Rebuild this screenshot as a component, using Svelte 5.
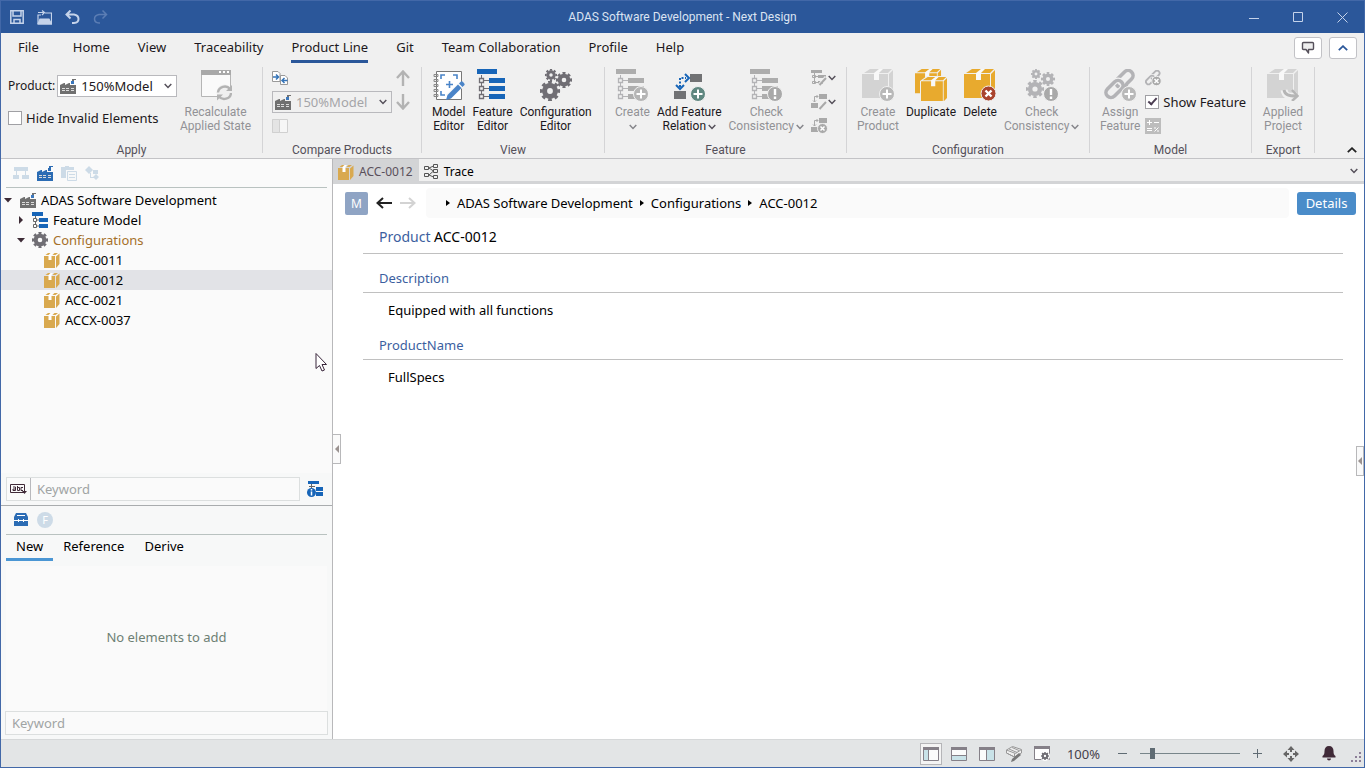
<script>
  const menus = ['File', 'Home', 'View', 'Traceability', 'Product Line', 'Git', 'Team Collaboration', 'Profile', 'Help'];
  const products = ['ACC-0011', 'ACC-0012', 'ACC-0021', 'ACCX-0037'];
  const crumbs = ['ADAS Software Development', 'Configurations', 'ACC-0012'];
  const fields = [
    { name: 'Description', value: 'Equipped with all functions' },
    { name: 'ProductName', value: 'FullSpecs' }
  ];

  let activeMenu = $state('Product Line');
  let selected = $state('ACC-0012');
  let paletteTab = $state('New');
  let hideInvalid = $state(false);
  let showFeature = $state(true);
  let zoom = $state(10);
</script>

{#snippet chevron(cls = '')}
  <svg class="chevron {cls}" width="8" height="6" viewBox="0 0 8 6" fill="none" stroke="currentColor" stroke-width="1.5"><path d="M.7 1 4 4.4 7.3 1" /></svg>
{/snippet}

{#snippet factory(dot = '#3c78bd')}
  <svg width="16" height="16" viewBox="0 0 16 16">
    <path fill="currentColor" d="M0 7l4-2h1v2l4-2h1v2h6v9H0zM12 2V1h4v1h-2v1h-2z" />
    <path fill={dot} d="M11 3h3v3h-3z" />
    <path fill="#dcdcdc" d="M2 10h3v1H2zm4 0h3v1H6zm5 0h3v1h-3zM2 12h3v1H2zm4 0h3v1H6zm5 0h3v1h-3z" />
  </svg>
{/snippet}

{#snippet smallBox()}
  <svg width="16" height="16" viewBox="0 0 16 16">
    <path fill="#d9a94f" d="M0 4h11v12H0zM1.500 3 4 1h4L6 3zm7 0 2-2H14l-2.500 2zM12 4.500l3.500-3V12L12 16z" />
    <path fill="#fff" d="M4.500 3h3v5h-3zM6.500 1H9L7.500 3h-3z" />
  </svg>
{/snippet}

{#snippet box()}
  <path fill="currentColor" d="M0 5h26v24H0zM2 4l6-4h22l-4 4zM27 5l4-4v24l-4 4z" />
  <path fill="#f8f8f8" d="M17 0h4l-4 4v7h-5V4z" />
{/snippet}

{#snippet plusBadge(fill)}
  <circle cx="25" cy="25" r="7.500" {fill} stroke="#f0f0f0" />
  <path stroke="#fff" stroke-width="2" d="M20.500 25h9M25 20.500v9" />
{/snippet}

{#snippet alertBadge()}
  <circle cx="25" cy="25" r="7.500" fill="#a9a9a9" stroke="#f0f0f0" />
  <path stroke="#fff" stroke-width="2.400" d="M25 20v6M25 27.500V30" />
{/snippet}

{#snippet featureTree(bar)}
  <path fill={bar} d="M0 0h20v5H0zM12 9h16v5H12zM12 17h16v5H12zM12 25h16v5H12z" />
  <path fill="none" stroke="currentColor" d="M4.500 6v22M7 11.500h5M7 19.500h5M7 27.500h5" />
  <path fill="#f0f0f0" stroke="currentColor" stroke-width="1.300" d="M2.500 9.500h4v4h-4zM2.500 17.500h4v4h-4zM2.500 25.500h4v4h-4z" />
{/snippet}

{#snippet cog(cx, cy, r)}
  <circle {cx} {cy} r={r * 0.54} fill="none" stroke="currentColor" stroke-width={r * 0.5} />
  <circle {cx} {cy} r={r * 0.86} fill="none" stroke="currentColor" stroke-width={r * 0.3} pathLength="16" stroke-dasharray="1.1 .9" stroke-dashoffset=".55" />
{/snippet}

{#snippet recalcIcon()}
  <svg width="32" height="32" viewBox="0 0 32 32" fill="none">
    <path fill="#fafafa" stroke="#b5b5b5" d="M1.500 2.500h29v25h-29z" />
    <path fill="#a9a9a9" d="M1 1h30v5H1z" />
    <path fill="#fff" d="M19 2h2v2h-2zM23 2h2v2h-2zM27 2h2v2h-2z" />
    <circle cx="24.500" cy="23.500" r="8" fill="#f0f0f0" />
    <path stroke="#b3b3b3" stroke-width="2.400" d="M18 23.500c.5-6 8.500-8 12-3.500M31 24c-.5 6-8.500 8-12 3.500" />
    <path fill="#b3b3b3" d="M32 16v6h-6zM17 31.500v-6h6z" />
  </svg>
{/snippet}

{#snippet modelIcon()}
  <svg width="32" height="32" viewBox="0 0 32 32" fill="none">
    <path fill="#fff" stroke="#777" d="M3.500 2.500h25v28h-25z" />
    <path stroke="#888" d="M1 5.500h4v2H1zM1 10.500h4v2H1zM1 15.500h4v2H1zM1 20.500h4v2H1zM1 25.500h4v2H1z" />
    <path stroke="#4a84c8" stroke-width="1.600" d="M8 10V6h4M20 6h4v4M8 22v4h4M16.500 12v7M13 15.500h7" />
    <path stroke="#f8f8f8" stroke-width="6" d="m15 28 14-13" />
    <path fill="#4a84c8" d="m13 31 1.500-5L25 15.500l3.500 3.500L18 29.500zM26 14.500l2-2c1-1 4.500 2.500 3.500 3.500l-2 2z" />
  </svg>
{/snippet}

{#snippet featureIcon()}
  <svg class="dark" width="32" height="32" viewBox="0 0 32 32">{@render featureTree('#1765b8')}</svg>
{/snippet}

{#snippet gearsIcon()}
  <svg class="gears" width="32" height="32" viewBox="0 0 32 32">
    {@render cog(11, 6, 6)}{@render cog(24, 11, 8)}{@render cog(10, 22, 10)}
  </svg>
{/snippet}

{#snippet createIcon()}
  <svg width="32" height="32" viewBox="0 0 32 32">{@render featureTree('#adadad')}{@render plusBadge('#b5b5b5')}</svg>
{/snippet}

{#snippet relationIcon()}
  <svg width="32" height="32" viewBox="0 0 32 32" fill="none">
    <path fill="#717274" d="M17 5h12v8H17zM1 22h12v8H1z" />
    <path stroke="#1765b8" stroke-width="2" stroke-dasharray="2 1.500" d="M7 18V9h6" />
    <path stroke="#1765b8" stroke-width="2" d="m12 5 4 4-4 4M3 16l4 4 4-4" />
    {@render plusBadge('#5f8780')}
  </svg>
{/snippet}

{#snippet checkFeatureIcon()}
  <svg width="32" height="32" viewBox="0 0 32 32">{@render featureTree('#adadad')}{@render alertBadge()}</svg>
{/snippet}

{#snippet createProductIcon()}
  <svg class="pale" width="32" height="32" viewBox="0 0 32 32">{@render box()}{@render plusBadge('#b9b9b9')}</svg>
{/snippet}

{#snippet duplicateIcon()}
  <svg class="gold" width="32" height="32" viewBox="0 0 32 32">
    <g transform="scale(.84)">{@render box()}</g>
    <path fill="#f0f0f0" d="m5 12 7-5h20v25H5z" />
    <g transform="translate(6 8) scale(.84)">{@render box()}</g>
  </svg>
{/snippet}

{#snippet deleteIcon()}
  <svg class="gold" width="32" height="32" viewBox="0 0 32 32">
    {@render box()}
    <circle cx="24.500" cy="24.500" r="7.500" fill="#aa442d" stroke="#f0f0f0" />
    <path stroke="#fff" stroke-width="2.400" d="m21.500 21.500 6 6m0-6-6 6" />
  </svg>
{/snippet}

{#snippet checkConfigIcon()}
  <svg width="32" height="32" viewBox="0 0 32 32">
    {@render cog(10, 5, 5)}{@render cog(22, 10, 7)}{@render cog(9, 20, 9)}{@render alertBadge()}
  </svg>
{/snippet}

{#snippet links()}
  <g fill="none" stroke="currentColor" stroke-width="3.600">
    <rect x="-10" y="-5" width="20" height="10" rx="5" transform="translate(20.500 10) rotate(-45)" />
    <rect x="-10" y="-5" width="20" height="10" rx="5" transform="translate(10.500 20) rotate(-45)" stroke="#f0f0f0" stroke-width="6" />
    <rect x="-10" y="-5" width="20" height="10" rx="5" transform="translate(10.500 20) rotate(-45)" />
    <path d="m17 21 6-6" />
  </g>
{/snippet}

{#snippet assignIcon()}
  <svg width="32" height="32" viewBox="0 0 32 32">{@render links()}{@render plusBadge('#b9b9b9')}</svg>
{/snippet}

{#snippet appliedIcon()}
  <svg class="pale" width="32" height="32" viewBox="0 0 32 32" fill="none">
    {@render box()}
    <path stroke="#f0f0f0" stroke-width="7" d="M17 21c1 6 5 7 13 6" />
    <path stroke="#b5b5b5" stroke-width="3" d="M17 21c1 5 5 6 12 6" />
    <path stroke="#b5b5b5" stroke-width="2.500" d="m25 21 5.500 6-5.500 5" />
  </svg>
{/snippet}

{#snippet large(icon, lines, disabled = false, menu = false)}
  <button class="large" {disabled}>
    {@render icon()}
    <span>{lines[0]}<br />{lines[1] ?? ''}{#if menu}{@render chevron('inline')}{/if}</span>
  </button>
{/snippet}

{#snippet miniFeature(kind)}
  <svg width="17" height="16" viewBox="0 0 17 16" fill="none" stroke="#a9a9a9">
    {#if kind === 'tree'}
      <path fill="#a9a9a9" stroke="none" d="M0 0h11v3H0zM7 5h8v3H7zM7 11h5v3H7z" />
      <path d="M3.500 3v11M1.500 5.500h3v2h-3zM1.500 11.500h3v2h-3zM5 6.500h2M5 12.500h2" />
    {:else}
      <path fill="#a9a9a9" stroke="none" d="M8 0h8v5H8zM0 9h7v5H0z" />
      <path d="M3.500 8V2.500H7M5.500 1l1.500 1.500L5.500 4M2 6.500 3.500 8 5 6.500" />
    {/if}
    {#if kind === 'remove'}
      <circle cx="11.500" cy="10.500" r="5" fill="#a9a9a9" stroke="#f0f0f0" />
      <path stroke="#fff" stroke-width="1.500" d="m9.500 8.500 4 4m0-4-4 4" />
    {:else}
      <path stroke="#f0f0f0" stroke-width="3" d="m8 15 7-8" />
      <path stroke-width="2" d="m8.500 15 6.500-7" />
    {/if}
  </svg>
{/snippet}

{#snippet miniTree()}
  <svg width="16" height="16" viewBox="0 0 16 16" fill="none">
    <path fill="#1765b8" d="M0 0h11v4H0zM7 6h9v4H7zM7 12h9v4H7z" />
    <path stroke="#666" d="M3.500 4v10M5 8h2M5 14h2" />
    <path fill="#fff" stroke="#666" d="M1.500 6.500h3v3h-3zM1.500 12.500h3v3h-3z" />
  </svg>
{/snippet}

{#snippet pane(kind)}
  <svg width="16" height="14" viewBox="0 0 16 14">
    <path fill="#fbfbfb" d="M1 1h14v12H1z" />
    {#if kind === 'left'}<path fill="#c9e2e8" d="M1 3h4v10H1z" /><path fill="#858088" d="M5 3h1v10H5z" />{/if}
    {#if kind === 'bottom'}<path fill="#c9e2e8" d="M1 9h14v4H1z" /><path fill="#858088" d="M1 8h14v1H1z" />{/if}
    {#if kind === 'right'}<path fill="#c9e2e8" d="M8 3h7v10H8z" /><path fill="#858088" d="M7 3h1v10H7z" />{/if}
    <path fill="#858088" d="M0 0h16v3H0z" />
    <path fill="none" stroke="#858088" d="M.5.5h15v13H.5z" />
  </svg>
{/snippet}

<div class="window">
  <header class="titlebar">
    <div class="quick">
      <button aria-label="Save"><svg width="14" height="14" viewBox="0 0 14 14" fill="none" stroke="currentColor" stroke-width="1.500"><path d="M.8.800h12.400v12.400H.8zM3 1v5h8V1M4 13V9.500h6V13" /></svg></button>
      <button aria-label="Open"><svg width="15" height="15" viewBox="0 0 15 15" fill="none" stroke="currentColor" stroke-width="1.200"><path d="M1 14V5h3m4-2h6.500v11H1M1 2.500h6M5 .5l2.500 2L5 5" /><path fill="currentColor" d="M1 14 3 9h9l2.500 5z" /></svg></button>
      <button aria-label="Undo"><svg width="15" height="14" viewBox="0 0 15 14" fill="none" stroke="currentColor" stroke-width="2"><path d="M2 4.500h7c6 1 6 8 0 8.500H7M5.500.5l-4 4 4 4" /></svg></button>
      <button aria-label="Redo" disabled><svg width="15" height="14" viewBox="0 0 15 14" fill="none" stroke="currentColor" stroke-width="1.500"><path d="M13 4.500H6c-6 1-6 8 0 8.500h1M9.500.5l4 4-4 4" /></svg></button>
    </div>
    <h1>ADAS Software Development - Next Design</h1>
    <div class="controls">
      <button aria-label="Minimize"><svg width="11" height="11" viewBox="0 0 11 11" stroke="currentColor"><path d="M0 6.500h10" /></svg></button>
      <button aria-label="Maximize"><svg width="11" height="11" viewBox="0 0 11 11" fill="none" stroke="currentColor"><path d="M.5.5h9v9h-9z" /></svg></button>
      <button aria-label="Close"><svg width="11" height="11" viewBox="0 0 11 11" stroke="currentColor"><path d="m.5.5 10 10m0-10-10 10" /></svg></button>
    </div>
  </header>

  <nav class="menubar">
    {#each menus as menu}
      <button class:active={menu === activeMenu} onclick={() => (activeMenu = menu)}>{menu}</button>
    {/each}
    <div class="menu-tools">
      <button aria-label="Comments"><svg width="14" height="14" viewBox="0 0 14 14" fill="#eee" stroke="#55505a" stroke-width="1.400"><path d="M1.500 2.500q0-1 1-1h9q1 0 1 1v5q0 1-1 1H7.500v3.500L5 8.500H2.500q-1 0-1-1z" stroke-linejoin="round" /></svg></button>
      <button aria-label="Collapse"><svg width="10" height="6" viewBox="0 0 10 6" fill="none" stroke="#2b579a" stroke-width="1.800"><path d="m.8 5.200 4.200-4 4.200 4" /></svg></button>
    </div>
  </nav>

  <section class="ribbon">
    <div class="group apply">
      <div class="tools">
        <div class="stack">
          <div class="row">
            <label for="product">Product:</label>
            <div class="combo">
              <i>{@render factory()}</i>
              <select id="product"><option>150%Model</option></select>
              {@render chevron()}
            </div>
          </div>
          <label class="check"><input type="checkbox" bind:checked={hideInvalid} />Hide Invalid Elements</label>
        </div>
        {@render large(recalcIcon, ['Recalculate', 'Applied State'], true)}
      </div>
      <h2>Apply</h2>
    </div>

    <div class="group compare">
      <div class="tools">
        <div class="column">
          <button class="mini" aria-label="Compare"><svg width="16" height="14" viewBox="0 0 16 14" fill="#fff" stroke="#999"><path d="M.5.5H6l2 2v8H.5zM8.500 4.500H13l2.500 2.500v6.500h-7z" /><path fill="none" stroke="#3574b8" stroke-width="1.500" d="M1 6h5M4 3.500 6.500 6 4 8.500M15.500 9.500h-5M12.500 7 10 9.500l2.500 2.500" /></svg></button>
          <div class="combo disabled">
            <i>{@render factory()}</i>
            <select disabled aria-label="Compare with"><option>150%Model</option></select>
            {@render chevron()}
          </div>
          <button class="mini" disabled aria-label="Split"><svg width="16" height="14" viewBox="0 0 16 14" stroke="#d0d0d0"><path fill="#f6f6f6" d="M.5.5h15v13H.5z" /><path fill="#e4e4e4" d="M.5.5h7v13h-7z" /></svg></button>
        </div>
        <div class="arrows">
          <button class="mini" disabled aria-label="Previous difference"><svg width="14" height="16" viewBox="0 0 14 16" fill="none" stroke="#b3b3b3" stroke-width="2.400"><path d="M7 16V2M1 8l6-6.500L13 8" /></svg></button>
          <button class="mini" disabled aria-label="Next difference"><svg width="14" height="16" viewBox="0 0 14 16" fill="none" stroke="#b3b3b3" stroke-width="2.400"><path d="M7 0v14M1 8l6 6.500L13 8" /></svg></button>
        </div>
      </div>
      <h2>Compare Products</h2>
    </div>

    <div class="group view">
      <div class="tools">
        {@render large(modelIcon, ['Model', 'Editor'])}
        {@render large(featureIcon, ['Feature', 'Editor'])}
        {@render large(gearsIcon, ['Configuration', 'Editor'])}
      </div>
      <h2>View</h2>
    </div>

    <div class="group feature">
      <div class="tools">
        {@render large(createIcon, ['Create'], true, true)}
        {@render large(relationIcon, ['Add Feature', 'Relation'], false, true)}
        {@render large(checkFeatureIcon, ['Check', 'Consistency'], true, true)}
        <div class="column minis">
          <button class="mini" disabled aria-label="Edit feature">{@render miniFeature('tree')}{@render chevron()}</button>
          <button class="mini" disabled aria-label="Edit relation">{@render miniFeature('relation')}{@render chevron()}</button>
          <button class="mini" disabled aria-label="Remove relation">{@render miniFeature('remove')}</button>
        </div>
      </div>
      <h2>Feature</h2>
    </div>

    <div class="group config">
      <div class="tools">
        {@render large(createProductIcon, ['Create', 'Product'], true)}
        {@render large(duplicateIcon, ['Duplicate'])}
        {@render large(deleteIcon, ['Delete'])}
        {@render large(checkConfigIcon, ['Check', 'Consistency'], true, true)}
      </div>
      <h2>Configuration</h2>
    </div>

    <div class="group model">
      <div class="tools">
        {@render large(assignIcon, ['Assign', 'Feature'], true)}
        <div class="column minis">
          <button class="mini" disabled aria-label="Unassign feature">
            <svg width="17" height="16" viewBox="0 0 34 32">
              {@render links()}
              <circle cx="23" cy="22" r="9.500" fill="#a9a9a9" stroke="#f0f0f0" stroke-width="2" />
              <path stroke="#fff" stroke-width="3" d="m19 18 8 8m0-8-8 8" />
            </svg>
          </button>
          <label class="check"><input type="checkbox" bind:checked={showFeature} />Show Feature</label>
          <button class="mini" disabled aria-label="Formula"><svg width="16" height="16" viewBox="0 0 16 16" fill="none" stroke="#fff"><path fill="#bdbdbd" stroke="none" d="M0 0h16v16H0z" /><path d="M2 4.500h5M4.500 2v5M9 4.500h5M2 10.500h5M2 12.500h5M9.500 13.500l4-4M9 10h2M12 13h2" /></svg></button>
        </div>
      </div>
      <h2>Model</h2>
    </div>

    <div class="group export">
      <div class="tools">{@render large(appliedIcon, ['Applied', 'Project'], true)}</div>
      <h2>Export</h2>
    </div>
    <button class="pin" aria-label="Collapse ribbon"><svg width="10" height="6" viewBox="0 0 10 6" fill="none" stroke="#222" stroke-width="1.800"><path d="m.8 5.200 4.200-4 4.200 4" /></svg></button>
  </section>

  <div class="body">
    <aside>
      <div class="navigator">
        <div class="toolbar">
          <button class="faded" aria-label="Structure"><svg width="16" height="16" viewBox="0 0 16 16" fill="currentColor"><path d="M1 2h14v4H1zM0 10h6v4H0zM9 10h7v4H9zM3 6h1v4H3zM12 6h1v4h-1z" /></svg></button>
          <button aria-label="Product line">{@render factory('#2b6cb4')}</button>
          <button class="faded" aria-label="Documents"><svg width="16" height="16" viewBox="0 0 16 16"><path fill="currentColor" d="M0 2h4V1h4v1h5v3H5v8H0z" /><path fill="#f7f8f8" stroke="currentColor" d="M6.500 6.500h9v9h-9zM8 9.500h6M8 12.500h6" /></svg></button>
          <button class="faded" aria-label="Relations"><svg width="16" height="16" viewBox="0 0 16 16" fill="currentColor"><path d="m0 5 4-4 4 4-4 4zM8 5h5v4H8zM8 12l3-3 3 3-3 3zM5 8h1v4h3v1H5z" /></svg></button>
        </div>
        <ul class="tree">
          <li class="l0"><svg class="twisty" width="8" height="5" viewBox="0 0 8 5"><path d="M0 0h8L4 4.500z" /></svg><span class="gray">{@render factory()}</span>ADAS Software Development</li>
          <li class="l1"><svg class="twisty" width="8" height="8" viewBox="0 0 8 8"><path d="M2 0v8l4-4z" /></svg>{@render miniTree()}Feature Model</li>
          <li class="l1 brown"><svg class="twisty" width="8" height="5" viewBox="0 0 8 5"><path d="M0 0h8L4 4.500z" /></svg><svg class="dark" width="16" height="16" viewBox="0 0 16 16">{@render cog(8, 8, 8)}</svg>Configurations</li>
          {#each products as product}
            <li class="l2" class:selected={product === selected}>
              <button onclick={() => (selected = product)}>{@render smallBox()}{product}</button>
            </li>
          {/each}
        </ul>
        <svg class="cursor" width="13" height="20" viewBox="0 0 13 20" fill="#fff" stroke="#38253a"><path d="M1 1.500v15l3.500-3 2.500 5.500 2.500-1L7 12.500h4.500z" /></svg>
        <div class="search">
          <div class="field">
            <button aria-label="Search type"><svg width="17" height="12" viewBox="0 0 17 12" fill="none" stroke="#402a38"><path d="M.5 1.500h14v8H.5z" /><path d="M3 4h2.500v3.500H3V6h2.500M7.500 3v4.500h2v-3h-2M13 4.500h-2v3h2" /><path fill="#402a38" stroke="none" d="M12 8h5l-2.500 3z" /></svg></button>
            <input placeholder="Keyword" aria-label="Search models" />
          </div>
          <button aria-label="Show feature details"><svg width="16" height="16" viewBox="0 0 16 16"><path fill="#1765b8" d="M1 0h11v3H1zM9 6h7v4H9zM9 11h7v4H9z" /><path stroke="#666" d="M4.500 3v4M2 5.500h6" /><circle cx="4.500" cy="11.500" r="4.500" fill="#1765b8" /><path stroke="#fff" stroke-width="1.500" d="M4.500 8v1.500M4.500 10.500v4" /></svg></button>
        </div>
      </div>

      <div class="palette">
        <div class="toolbar">
          <button aria-label="Toolbox"><svg width="16" height="14" viewBox="0 0 16 14"><path fill="#2b6cb4" d="M3 0h10l2 4v9H1V4z" /><path fill="none" stroke="#fff" d="M4 2.500h8M1 7.500h14M5.500 6v3M10.500 6v3" /></svg></button>
          <button class="badge" aria-label="Feature palette">F</button>
        </div>
        <div class="tabs">
          {#each ['New', 'Reference', 'Derive'] as tab}
            <button class:active={tab === paletteTab} onclick={() => (paletteTab = tab)}>{tab}</button>
          {/each}
        </div>
        <p class="empty">No elements to add</p>
        <input class="filter" placeholder="Keyword" aria-label="Filter elements" />
      </div>
    </aside>

    <main>
      <div class="doc-tabs">
        <button class="active">{@render smallBox()}ACC-0012</button>
        <button><svg width="15" height="15" viewBox="0 0 15 15" fill="none" stroke="#555"><path d="M.5 2.500h4v3h-4zM.5 9.500h4v3h-4zM9.500.5h4v3h-4zM9.500 5.500h4v3h-4zM9.500 11.500h4v3h-4zM5 4l4.500-2M5 4l4.500 3M5 11l4.500-4M5 11l4.500 2" /></svg>Trace</button>
        <span class="more">{@render chevron()}</span>
      </div>
      <div class="path">
        <span class="mark">M</span>
        <button aria-label="Back"><svg width="16" height="12" viewBox="0 0 16 12" fill="none" stroke="#222" stroke-width="2"><path d="M16 6H2M7 1 1.500 6 7 11" /></svg></button>
        <button disabled aria-label="Forward"><svg width="16" height="12" viewBox="0 0 16 12" fill="none" stroke="#d3d3d3" stroke-width="2"><path d="M0 6h14M9 1l5.500 5L9 11" /></svg></button>
        <div class="crumbs">
          {#each crumbs as crumb}
            <svg width="4" height="6" viewBox="0 0 4 6"><path d="M0 0v6l4-3z" /></svg><a href="#{crumb}">{crumb}</a>
          {/each}
        </div>
        <button class="details">Details</button>
      </div>
      <article>
        <h3><span>Product</span> ACC-0012</h3>
        {#each fields as field}
          <h4>{field.name}</h4>
          <p>{field.value}</p>
        {/each}
      </article>
      <button class="handle left" aria-label="Collapse navigator"><svg width="4" height="8" viewBox="0 0 4 8"><path d="M4 0v8L0 4z" /></svg></button>
      <button class="handle right" aria-label="Expand inspector"><svg width="4" height="8" viewBox="0 0 4 8"><path d="M4 0v8L0 4z" /></svg></button>
    </main>
  </div>

  <footer>
    <button class="pane on" aria-label="Left pane">{@render pane('left')}</button>
    <button class="pane" aria-label="Bottom pane">{@render pane('bottom')}</button>
    <button class="pane" aria-label="Right pane">{@render pane('right')}</button>
    <button class="pane" aria-label="Edit layout"><svg width="17" height="16" viewBox="0 0 17 16" fill="#eee" stroke="#999"><path d="m.5 4 6-3.500 9 3-6 4zM.5 4v3l8 4V7.500M3 3l8 3.500M6 1.500l7 3M.5 7l8 4 7-4V4" /><path fill="#777" stroke="none" d="m5 16 1-3 7-6 2 2-7 6z" /></svg></button>
    <button class="pane" aria-label="View settings"><svg class="dark" width="17" height="15" viewBox="0 0 17 15"><path fill="#fff" stroke="#858088" d="M.5 1.500h15v12H.5z" /><path fill="#858088" d="M0 0h16v3H0z" /><circle cx="11" cy="10" r="5" fill="#fff" />{@render cog(11, 10, 4)}</svg></button>
    <span class="percent">100%</span>
    <button aria-label="Zoom out"><svg width="9" height="9" viewBox="0 0 9 9" stroke="#5f6b73"><path d="M0 4.500h9" /></svg></button>
    <input type="range" min="0" max="100" bind:value={zoom} aria-label="Zoom" />
    <button aria-label="Zoom in"><svg width="9" height="9" viewBox="0 0 9 9" stroke="#5f6b73"><path d="M0 4.500h9M4.500 0v9" /></svg></button>
    <button class="fit" aria-label="Fit"><svg width="16" height="16" viewBox="0 0 16 16" fill="#666"><path d="m8 0 3.500 4H9v2H7V4H4.500zM8 16l-3.500-4H7v-2h2v2h2.500zM0 8l4-3.500V7h2v2H4v2.500zM16 8l-4 3.500V9h-2V7h2V4.500z" /></svg></button>
    <button aria-label="Notifications"><svg width="14" height="15" viewBox="0 0 14 15" fill="#402a38"><path d="M7 0c3 0 4.500 2 4.500 5 0 3 .5 4 2 5v1.500H.5V10c1.500-1 2-2 2-5 0-3 1.500-5 4.500-5zM5 12.500h4c0 2.500-4 2.500-4 0z" /></svg></button>
    <svg class="grip" width="11" height="11" viewBox="0 0 11 11" fill="#8d7f98"><path d="M8 0h2v2H8zM4 4h2v2H4zM8 4h2v2H8zM0 8h2v2H0zM4 8h2v2H4zM8 8h2v2H8z" /></svg>
  </footer>
</div>

<style>
  :global(body) {
    margin: 0;
  }

  .window {
    display: flex;
    flex-direction: column;
    box-sizing: border-box;
    min-height: 100vh;
    border: 1px solid #4268a8;
    background: #f0f0f0;
    color: #1c1820;
    font: 13px/20px "Noto Sans", "Open Sans", sans-serif;
  }

  .window *,
  .window *::after {
    box-sizing: border-box;
  }

  h1, h2, h3, h4, p, ul {
    margin: 0;
    padding: 0;
    font-weight: normal;
  }

  svg {
    display: block;
    flex: none;
  }

  button {
    display: flex;
    align-items: center;
    justify-content: center;
    padding: 0;
    border: 0;
    background: none;
    color: inherit;
    font: inherit;
  }

  input, select {
    border: 0;
    border-radius: 0;
    color: inherit;
    font: inherit;
  }

  /* title bar */
  .titlebar {
    display: grid;
    grid-template-columns: 1fr auto 1fr;
    align-items: center;
    height: 32px;
    background: #2b579a;
    color: #c5d3ea;
  }

  .titlebar h1 {
    color: #dbe4f2;
    font: 12px/20px Roboto, sans-serif;
  }

  .quick {
    display: flex;
    gap: 13px;
    padding-left: 9px;
  }

  .quick :disabled {
    color: #5b7db4;
  }

  .controls {
    display: flex;
    justify-content: flex-end;
  }

  .controls button {
    width: 44px;
    height: 32px;
  }

  /* menu */
  .menubar {
    display: flex;
    height: 30px;
    padding-left: 7px;
  }

  .menubar > button {
    margin: 0 18px 0 10px;
    padding: 0 0 3px;
    border-bottom: 3px solid transparent;
    border-top: 3px solid transparent;
  }

  .menubar > button:first-child {
    margin-right: 24px;
  }

  .menubar > .active {
    border-bottom-color: #2b579a;
  }

  .menu-tools {
    display: flex;
    gap: 7px;
    margin-left: auto;
    padding: 4px 7px 4px 0;
  }

  .menu-tools button {
    width: 28px;
    height: 22px;
    border: 1px solid #c2c2c6;
    border-radius: 3px;
    background: #fff;
  }

  /* ribbon */
  .ribbon {
    display: flex;
    height: 96px;
    padding: 4px 0 5px;
    border-bottom: 1px solid #c3c3c6;
  }

  .group {
    display: flex;
    flex: none;
    flex-direction: column;
    justify-content: space-between;
    border-right: 1px solid #d4d4d6;
  }

  .group h2 {
    height: 10px;
    color: #55505a;
    font: 12px/14px Roboto, sans-serif;
    text-align: center;
  }

  .apply { width: 262px; }
  .compare { width: 159px; }
  .view { width: 183px; }
  .feature { width: 242px; }
  .config { width: 243px; }
  .model { width: 162px; }
  .export { width: 63px; }

  .tools {
    display: flex;
    padding: 2px 8px 0;
  }

  .view .tools,
  .feature .tools,
  .config .tools {
    gap: 7px;
    padding: 2px 10px 0;
  }

  .large {
    flex: none;
    flex-direction: column;
    justify-content: flex-start;
    gap: 4px;
    font: 12px/14px Roboto, sans-serif;
  }

  .large:disabled {
    color: #929296;
  }

  .large:disabled > svg,
  .mini:disabled {
    color: #b3b3b6;
  }

  .large:disabled > .pale {
    color: #d3d3d3;
  }

  .chevron {
    color: #55505a;
  }

  .large .inline {
    display: inline-block;
    margin-left: 2px;
  }

  .large:disabled .inline {
    color: #85858a;
  }

  .gold {
    color: #e8aa2e;
  }

  .dark,
  .gears {
    color: #706e74;
  }

  .apply .tools {
    padding-left: 7px;
  }

  .stack {
    display: flex;
    flex-direction: column;
    gap: 11px;
    padding-top: 6px;
    width: 172px;
  }

  .row,
  .check {
    display: flex;
    align-items: center;
    white-space: nowrap;
  }

  .row {
    gap: 2px;
    font-size: 12px;
  }

  .check {
    gap: 4px;
  }

  .check input {
    position: relative;
    width: 14px;
    height: 14px;
    margin: 0;
    border: 1px solid #a0a0a4;
    background: #fff;
    appearance: none;
  }

  .check input:checked::after {
    position: absolute;
    top: 0;
    left: 4px;
    width: 5px;
    height: 9px;
    border: solid #4b3d52;
    border-width: 0 2px 2px 0;
    content: '';
    transform: rotate(42deg);
  }

  .combo {
    position: relative;
    display: flex;
    align-items: center;
    width: 120px;
    height: 22px;
    border: 1px solid #b9b9bd;
    background: #fff;
    color: #707070;
  }

  .combo i {
    position: absolute;
    left: 2px;
  }

  .combo select {
    width: 100%;
    height: 20px;
    padding: 0 0 1px 23px;
    background: transparent;
    color: #1c1820;
    font-size: 13px;
    appearance: none;
    opacity: 1;
  }

  .combo .chevron {
    position: absolute;
    right: 4px;
  }

  .combo.disabled {
    background: #f0f0f0;
  }

  .combo.disabled select {
    color: #a5a5a8;
  }

  .column {
    display: flex;
    flex-direction: column;
    align-items: flex-start;
  }

  .compare .column {
    gap: 5px;
    padding: 1px 0 0 1px;
  }

  .arrows {
    display: flex;
    flex-direction: column;
    gap: 8px;
    padding: 1px 0 0 4px;
  }

  .mini {
    height: 16px;
  }

  .minis {
    gap: 8px;
    padding-top: 1px;
  }

  .model .tools {
    gap: 5px;
    padding-left: 10px;
  }

  .model .minis {
    gap: 6px;
  }

  .export .tools {
    justify-content: center;
  }

  .pin {
    align-self: flex-end;
    margin: 0 7px 0 auto;
  }

  /* body */
  .body {
    display: flex;
    flex: 1;
    color: #000;
  }

  aside {
    display: flex;
    flex: none;
    flex-direction: column;
    width: 332px;
    border-right: 1px solid #b8b8ba;
    background: #fafafa;
  }

  .navigator {
    position: relative;
    display: flex;
    flex: 1;
    flex-direction: column;
    border-bottom: 1px solid #a9acae;
  }

  .toolbar {
    display: flex;
    gap: 8px;
    align-items: center;
    height: 29px;
    padding: 0 7px;
    border-bottom: 1px solid #b9c2c0;
    margin: 0 5px;
    color: #2b6cb4;
  }

  .faded {
    color: #cddbe7;
  }

  .tree {
    flex: 1;
    padding-top: 2px;
    list-style: none;
  }

  .tree li,
  .tree button {
    display: flex;
    align-items: center;
    gap: 5px;
  }

  .tree li {
    height: 20px;
  }

  .l0 { padding-left: 3px; }
  .l1 { padding-left: 16px; }
  .l2 { padding-left: 43px; }

  .twisty {
    margin-right: 2px;
    fill: #3d2b36;
  }

  .gray {
    margin-left: 1px;
    color: #707070;
  }

  .brown {
    color: #a5702a;
  }

  .selected {
    background: #e2e3e7;
  }

  /* mouse pointer, over the tree */
  .cursor {
    position: absolute;
    top: 193px;
    left: 314px;
  }

  .search {
    display: flex;
    gap: 7px;
    align-items: center;
    height: 32px;
    padding: 0 9px 0 5px;
    background: #f7f8f8;
  }

  .field {
    display: flex;
    flex: 1;
    height: 24px;
    border: 1px solid #dcdfdf;
    background: #fafafa;
  }

  .field button {
    width: 24px;
    border-right: 1px solid #b9b9bd;
  }

  .field input {
    flex: 1;
    min-width: 0;
    padding: 0 6px;
    background: transparent;
  }

  input::placeholder {
    color: #a0a4a4;
    opacity: 1;
  }

  .palette {
    display: flex;
    flex: 0 0 233px;
    flex-direction: column;
    background: #f7f8f8;
  }

  .badge {
    width: 16px;
    height: 16px;
    border-radius: 50%;
    background: #cddbe7;
    color: #fff;
    font-size: 11px;
  }

  .tabs {
    display: flex;
    height: 31px;
    padding: 0 5px 5px;
  }

  .tabs button {
    padding: 0 10px 1px;
    border-bottom: 3px solid transparent;
  }

  .tabs .active {
    border-color: #4a96d4;
  }

  .empty {
    display: flex;
    flex: 1;
    align-items: center;
    justify-content: center;
    margin: 0 5px;
    padding-bottom: 4px;
    background: #fafafa;
    color: #6d8074;
  }

  .filter {
    height: 24px;
    margin: 0 4px 4px;
    padding: 0 6px;
    border: 1px solid #dcdfdf;
    background: #fafafa;
  }

  main {
    position: relative;
    display: flex;
    flex: 1;
    flex-direction: column;
    min-width: 0;
    background: #fff;
  }

  .doc-tabs {
    display: flex;
    height: 25px;
    border-bottom: 3px solid #d3d4d6;
    background: #f0f0f0;
    font-size: 12px;
  }

  .doc-tabs button {
    gap: 5px;
    padding: 3px 6px 0 5px;
  }

  .doc-tabs .active {
    background: #d3d4d6;
    color: #5a505c;
  }

  .more {
    margin: 9px 6px 0 auto;
  }

  .path {
    display: flex;
    gap: 8px;
    align-items: center;
    padding: 4px 8px 1px 12px;
  }

  .mark {
    width: 23px;
    height: 23px;
    border-radius: 2px;
    background: #8fa4c4;
    color: #fff;
    font-size: 12px;
    line-height: 23px;
    text-align: center;
  }

  .crumbs {
    display: flex;
    flex: 1;
    gap: 7px;
    align-items: center;
    height: 30px;
    margin-left: 2px;
    padding-left: 20px;
    border-radius: 4px;
    background: #fafafa;
  }

  .crumbs a {
    color: #000;
    text-decoration: none;
  }

  .details {
    width: 59px;
    height: 23px;
    border-radius: 3px;
    background: #4a8cc9;
    color: #fff;
  }

  article {
    padding: 0 21px 0 30px;
  }

  article h3 {
    height: 35px;
    padding: 7px 16px 0;
    border-bottom: 1px solid #c0c0c0;
    font-size: 14px;
    line-height: 22px;
  }

  article h3 span,
  article h4 {
    color: #3c5f9f;
  }

  article h4 {
    height: 39px;
    padding: 14px 16px 0;
    border-bottom: 1px solid #c0c0c0;
  }

  article p {
    height: 28px;
    padding: 7px 25px 0;
  }

  .handle {
    position: absolute;
    width: 8px;
    height: 30px;
    border: 1px solid #b8b8ba;
    background: #fafafa;
    fill: #9a9290;
  }

  .handle.left {
    top: 275px;
    left: 0;
    border-left: 0;
  }

  .handle.right {
    top: 287px;
    right: 0;
  }

  /* status bar */
  footer {
    display: flex;
    align-items: center;
    justify-content: flex-end;
    height: 28px;
    padding-right: 2px;
    border-top: 1px solid #d6d8d9;
    background: #e3e5e6;
  }

  .pane {
    width: 22px;
    height: 22px;
    margin-right: 6px;
  }

  .pane.on {
    border: 1px solid #b5b5b8;
    background: #f4f4f4;
  }

  .percent {
    margin: 0 18px 0 7px;
    color: #45404a;
  }

  input[type='range'] {
    width: 100px;
    height: 11px;
    margin: 0 13px;
    background: linear-gradient(#78858a, #78858a) center / 100% 1px no-repeat;
    appearance: none;
  }

  input[type='range']::-webkit-slider-thumb {
    width: 5px;
    height: 11px;
    background: #5f6b73;
    appearance: none;
  }

  .fit {
    margin: 0 23px 0 21px;
  }

  .grip {
    align-self: flex-end;
    margin: 0 0 4px 15px;
  }
</style>
